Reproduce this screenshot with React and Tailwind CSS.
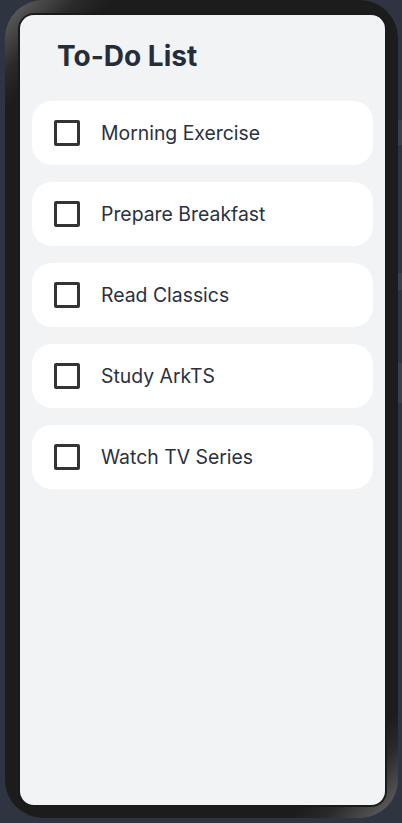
import React from "react";

const todos = [
  "Morning Exercise",
  "Prepare Breakfast",
  "Read Classics",
  "Study ArkTS",
  "Watch TV Series",
];

function TodoItem({ label }) {
  return (
    <div className="flex h-[64px] items-center rounded-[20px] bg-white pl-[22px]">
      <div className="h-[26px] w-[26px] rounded-[2px] border-[3px] border-[#333333]" />
      <span className="ml-[21px] mt-[2px] text-[19.4px] text-[#2a3140]">{label}</span>
    </div>
  );
}

export default function App() {
  return (
    <div
      className="relative h-[823px] w-[402px] overflow-hidden bg-[#2e3440]"
      style={{ fontFamily: "Inter, 'Noto Sans', sans-serif" }}
    >
      {/* side buttons */}
      <div className="absolute right-0 top-[120px] h-[25px] w-[4px] bg-[#3b414c]" />
      <div className="absolute right-0 top-[273px] h-[17px] w-[4px] bg-[#3b414c]" />
      <div className="absolute right-0 top-[363px] h-[40px] w-[4px] bg-[#3b414c]" />

      <div className="ml-[5px] h-[818px] w-[393px] rounded-[38px] bg-[linear-gradient(135deg,#6a6a6a_0%,#2a2a2a_6%,#1c1c1c_9%,#1c1c1c_91%,#2a2a2a_94%,#6a6a6a_100%)] pb-[11px] pl-[13px] pr-[11px] pt-[13px]">
        <div className="h-full w-full rounded-[16px] border-2 border-[#1a1a1a]">
          <div className="flex h-full w-full flex-col rounded-[14px] bg-[#f1f3f5] px-[12px]">
            <h1 className="mt-[24px] pl-[25px] text-[28px] font-bold leading-[34px] text-[#262d3a]">
              To-Do List
            </h1>
            <div className="mt-[28px] flex flex-col gap-[17px]">
              {todos.map((t) => (
                <TodoItem key={t} label={t} />
              ))}
            </div>
          </div>
        </div>
      </div>
    </div>
  );
}
